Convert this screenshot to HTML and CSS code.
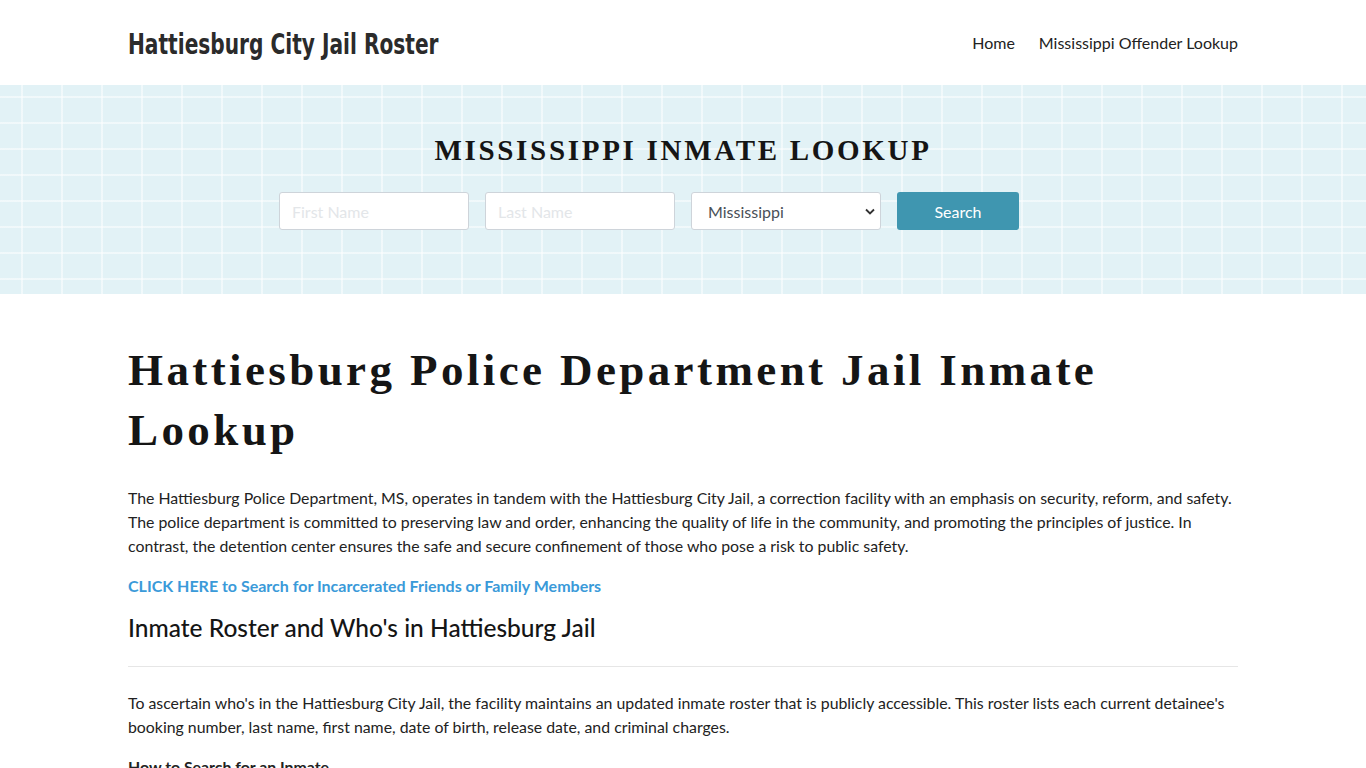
FILE: index.html
```html
<!DOCTYPE html>
<html lang="en">
<head>
<meta charset="utf-8">
<title>Hattiesburg City Jail Roster</title>
<link rel="stylesheet" href="styles.css">
</head>
<body>
<header class="site-header">
  <div class="container header-inner">
    <a class="logo" href="#">Hattiesburg City Jail Roster</a>
    <nav class="nav">
      <a href="#">Home</a>
      <a href="#">Mississippi Offender Lookup</a>
    </nav>
  </div>
</header>
<section class="banner">
  <div class="container">
    <h2 class="banner-title">MISSISSIPPI INMATE LOOKUP</h2>
    <form class="search-form">
      <input class="field" type="text" placeholder="First Name">
      <input class="field" type="text" placeholder="Last Name">
      <select class="field select">
        <option>Mississippi</option>
      </select>
      <button class="btn" type="button">Search</button>
    </form>
  </div>
</section>
<main class="container content">
  <h1 class="page-title">Hattiesburg Police Department Jail Inmate Lookup</h1>
  <p>The Hattiesburg Police Department, MS, operates in tandem with the Hattiesburg City Jail, a correction facility with an emphasis on security, reform, and safety. The police department is committed to preserving law and order, enhancing the quality of life in the community, and promoting the principles of justice. In contrast, the detention center ensures the safe and secure confinement of those who pose a risk to public safety.</p>
  <p><a class="cta" href="#">CLICK HERE to Search for Incarcerated Friends or Family Members</a></p>
  <h2 class="section-title">Inmate Roster and Who's in Hattiesburg Jail</h2>
  <hr class="rule">
  <p>To ascertain who's in the Hattiesburg City Jail, the facility maintains an updated inmate roster that is publicly accessible. This roster lists each current detainee's booking number, last name, first name, date of birth, release date, and criminal charges.</p>
  <p class="sub">How to Search for an Inmate</p>
  <p>Visit the official website of the Hattiesburg Police Department and navigate to the inmate roster section to view current detainees.</p>
</main>
</body>
</html>
```
FILE: styles.css
```css
* { box-sizing: border-box; }
html, body { margin: 0; padding: 0; }
body {
  font-family: Lato, "Noto Sans", sans-serif;
  font-size: 15.85px;
  line-height: 24px;
  color: #222;
  background: #fff;
}
.container {
  width: 1110px;
  margin: 0 auto;
}
.site-header {
  height: 85px;
  background: #fff;
}
.header-inner {
  height: 85px;
  display: flex;
  align-items: center;
  justify-content: space-between;
}
.logo {
  display: inline-block;
  font-family: "DejaVu Sans", sans-serif;
  font-weight: 700;
  font-size: 29px;
  line-height: 36px;
  color: #2b2b2b;
  text-decoration: none;
  transform: scaleX(0.695);
  transform-origin: left center;
  padding-top: 2px;
}
.nav {
  display: flex;
  gap: 24px;
}
.nav a {
  font-size: 16px;
  color: #222;
  text-decoration: none;
}
.banner {
  height: 209px;
  background-color: #e2f2f6;
  background-image:
    repeating-linear-gradient(to right, transparent 0, transparent 21px, rgba(255,255,255,0.5) 21px, rgba(255,255,255,0.5) 23px, transparent 23px, transparent 40px),
    repeating-linear-gradient(to bottom, transparent 0, transparent 11px, rgba(255,255,255,0.5) 11px, rgba(255,255,255,0.5) 13px, transparent 13px, transparent 26px);
  padding-top: 48px;
}
.banner-title {
  margin: 0;
  text-align: center;
  font-family: "Liberation Serif", "Times New Roman", serif;
  font-weight: 700;
  font-size: 29px;
  line-height: 34px;
  letter-spacing: 2.7px;
  color: #151515;
}
.search-form {
  margin-top: 25px;
  display: flex;
  justify-content: center;
  gap: 16px;
  padding-right: 68px;
}
.field {
  width: 190px;
  height: 38px;
  border: 1px solid #ced4da;
  border-radius: 3px;
  background: #fff;
  font-family: Lato, sans-serif;
  font-size: 16px;
  padding: 0 12px;
  color: #495057;
}
.field::placeholder { color: #e3e6e9; }
.select {
  padding-left: 16px;
  appearance: none;
  -webkit-appearance: none;
  background-image: url("data:image/svg+xml,%3Csvg xmlns='http://www.w3.org/2000/svg' width='10' height='7' viewBox='0 0 10 7'%3E%3Cpath d='M1 1.5l4 4 4-4' fill='none' stroke='%23333' stroke-width='1.8'/%3E%3C/svg%3E");
  background-repeat: no-repeat;
  background-position: right 5px center;
}
.btn {
  width: 122px;
  height: 38px;
  border: none;
  border-radius: 3px;
  background: #3f96b0;
  color: #fff;
  font-family: Lato, sans-serif;
  font-size: 16px;
}
.content {
  padding-top: 46px;
}
.page-title {
  margin: 0 0 26px;
  font-family: "Liberation Serif", "Times New Roman", serif;
  font-weight: 700;
  font-size: 45px;
  line-height: 60px;
  letter-spacing: 3.4px;
  color: #151515;
}
.content p { margin: 0 0 16px; }
.cta {
  color: #3a9ad9;
  font-weight: 700;
  font-size: 16px;
  text-decoration: none;
}
.section-title {
  margin: 0;
  font-size: 24.5px;
  line-height: 28px;
  font-weight: 500;
  color: #151515;
}
.rule {
  border: 0;
  border-top: 1px solid #e6e6e6;
  margin: 24px 0 24px;
}
.sub { font-weight: 700; }
```
